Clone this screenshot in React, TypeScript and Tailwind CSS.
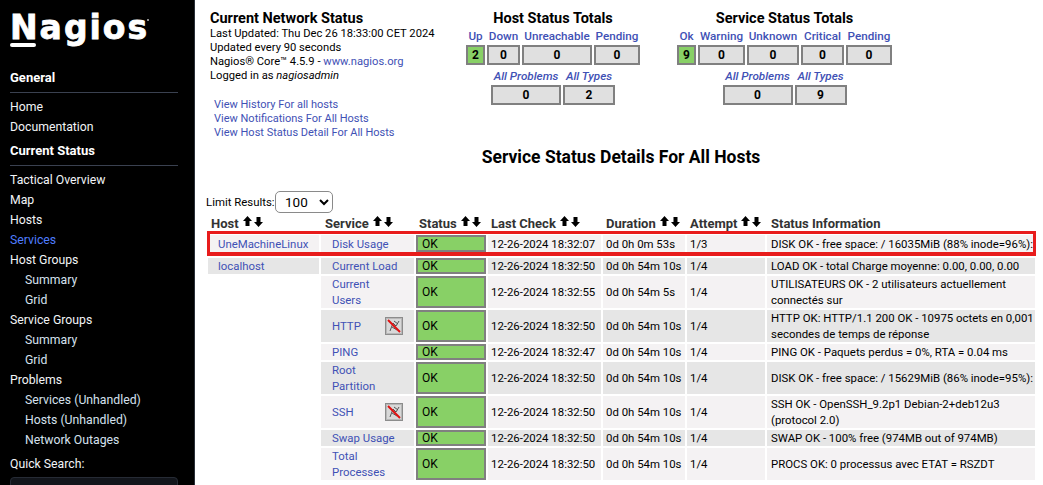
import React from "react";

const font = { fontFamily: "Roboto, 'Liberation Sans', sans-serif" };

function NavItem({ label, sub, active }: { label: string; sub?: boolean; active?: boolean }) {
  return (
    <div
      className={
        "h-5 leading-5 text-[12.25px] whitespace-nowrap " +
        (sub ? "pl-[15px] " : "") +
        (active ? "text-[#4f7dff]" : sub ? "text-[#d5e0ee]" : "text-[#f2f4f7]")
      }
    >
      {label}
    </div>
  );
}

function Sidebar() {
  return (
    <aside className="w-[195px] shrink-0 bg-black border-r border-[#2a2f38] pl-[10px] pr-[16px] h-[485px] overflow-hidden">
      <div className="relative h-[70px] pt-[9px]">
        <div className="text-white font-bold text-[33px] leading-[38px] tracking-[2px] [-webkit-text-stroke:0.8px_white]" style={{ fontFamily: "'DejaVu Sans', sans-serif" }}>
          Nagios
        </div>
        <div className="absolute left-0 top-[43px] w-[26px] h-[4px] bg-white rounded-sm" />
        <div className="absolute left-[137px] top-[19px] w-[2px] h-[2px] rounded-full bg-[#bbb]" />
      </div>
      <div className="h-[16px] leading-4 font-bold text-[13px] text-white">General</div>
      <div className="h-px bg-[#3a4150] mt-[6px] mb-[4px]" />
      <NavItem label="Home" />
      <NavItem label="Documentation" />
      <div className="h-[16px] leading-4 font-bold text-[13px] text-white mt-[6px]">Current Status</div>
      <div className="h-px bg-[#3a4150] mt-[6px] mb-[4px]" />
      <NavItem label="Tactical Overview" />
      <NavItem label="Map" />
      <NavItem label="Hosts" />
      <NavItem label="Services" active />
      <NavItem label="Host Groups" />
      <NavItem label="Summary" sub />
      <NavItem label="Grid" sub />
      <NavItem label="Service Groups" />
      <NavItem label="Summary" sub />
      <NavItem label="Grid" sub />
      <NavItem label="Problems" />
      <NavItem label="Services (Unhandled)" sub />
      <NavItem label="Hosts (Unhandled)" sub />
      <NavItem label="Network Outages" sub />
      <div className="h-4 leading-4 text-[12.25px] text-[#f2f4f7] mt-[6px]">Quick Search:</div>
      <div className="h-6 mt-[5px] rounded-[4px] bg-[#12151b] border border-[#262b35]" />
    </aside>
  );
}

function Tot({ w, v, ok }: { w: string; v: number; ok?: boolean }) {
  return (
    <div
      className={
        w +
        " h-[20px] border-2 border-[#808080] flex items-center justify-center font-bold text-[12px] text-black " +
        (ok ? "bg-[#88d066]" : "bg-[#e0e0e0]")
      }
    >
      {v}
    </div>
  );
}

function Lbl({ w, t, italic }: { w: string; t: string; italic?: boolean }) {
  return (
    <div className={w + " text-center text-[#3f51b5] font-medium text-[11.7px] leading-4 whitespace-nowrap " + (italic ? "italic" : "")}>
      {t}
    </div>
  );
}

function HostTotals() {
  return (
    <div className="w-[174px]">
      <div className="text-center font-bold text-[14.5px] pt-[2px] leading-[16px] text-black">Host Status Totals</div>
      <div className="flex gap-[2px] mt-px mb-px">
        <Lbl w="w-[19px]" t="Up" />
        <Lbl w="w-[33px]" t="Down" />
        <Lbl w="w-[70px]" t="Unreachable" />
        <Lbl w="w-[46px]" t="Pending" />
      </div>
      <div className="flex gap-[2px]">
        <Tot w="w-[19px]" v={2} ok />
        <Tot w="w-[33px]" v={0} />
        <Tot w="w-[70px]" v={0} />
        <Tot w="w-[46px]" v={0} />
      </div>
      <div className="flex gap-[2px] justify-center mt-[3px] mb-px">
        <Lbl w="w-[70px]" t="All Problems" italic />
        <Lbl w="w-[52px]" t="All Types" italic />
      </div>
      <div className="flex gap-[2px] justify-center">
        <Tot w="w-[70px]" v={0} />
        <Tot w="w-[52px]" v={2} />
      </div>
    </div>
  );
}

function ServiceTotals() {
  return (
    <div className="w-[215px]">
      <div className="text-center font-bold text-[14.5px] pt-[2px] leading-[16px] text-black">Service Status Totals</div>
      <div className="flex gap-[2px] mt-px mb-px">
        <Lbl w="w-[19px]" t="Ok" />
        <Lbl w="w-[47px]" t="Warning" />
        <Lbl w="w-[52px]" t="Unknown" />
        <Lbl w="w-[43px]" t="Critical" />
        <Lbl w="w-[46px]" t="Pending" />
      </div>
      <div className="flex gap-[2px]">
        <Tot w="w-[19px]" v={9} ok />
        <Tot w="w-[47px]" v={0} />
        <Tot w="w-[52px]" v={0} />
        <Tot w="w-[43px]" v={0} />
        <Tot w="w-[46px]" v={0} />
      </div>
      <div className="flex gap-[2px] justify-center mt-[3px] mb-px">
        <Lbl w="w-[70px]" t="All Problems" italic />
        <Lbl w="w-[52px]" t="All Types" italic />
      </div>
      <div className="flex gap-[2px] justify-center">
        <Tot w="w-[70px]" v={0} />
        <Tot w="w-[52px]" v={9} />
      </div>
    </div>
  );
}

function SortArrows() {
  return (
    <svg width="20" height="11" viewBox="0 0 20 11" className="inline-block ml-[4px] align-[1px]">
      <path d="M4.5 0 L9 5 H6.5 V10 H2.5 V5 H0 Z" fill="#000" />
      <path d="M15.5 11 L11 6 H13.5 V1 H17.5 V6 H20 Z" fill="#000" />
    </svg>
  );
}

function PassiveIcon() {
  return (
    <svg width="18" height="18" viewBox="0 0 18 18" className="shrink-0">
      <rect x="0.5" y="0.5" width="17" height="17" fill="#d8d8d8" stroke="#8c8c8c" strokeWidth="1" />
      <rect x="1.5" y="1.5" width="15" height="15" fill="none" stroke="#b8b8b8" strokeWidth="1" />
      <path d="M5 14 L8 6 L11 9 L14 4 M7 10 L12 13 M9 4 L13 7" stroke="#555" strokeWidth="1" fill="none" />
      <path d="M3 3 L15 15" stroke="#e01010" strokeWidth="2" />
    </svg>
  );
}

type Row = {
  host?: string;
  service: string[];
  icon?: boolean;
  check: string;
  dur: string;
  att: string;
  info: string[];
};

const rows: Row[] = [
  { host: "UneMachineLinux", service: ["Disk Usage"], check: "12-26-2024 18:32:07", dur: "0d 0h 0m 53s", att: "1/3", info: ["DISK OK - free space: / 16035MiB (88% inode=96%):"] },
  { host: "localhost", service: ["Current Load"], check: "12-26-2024 18:32:50", dur: "0d 0h 54m 10s", att: "1/4", info: ["LOAD OK - total Charge moyenne: 0.00, 0.00, 0.00"] },
  { service: ["Current", "Users"], check: "12-26-2024 18:32:55", dur: "0d 0h 54m 5s", att: "1/4", info: ["UTILISATEURS OK - 2 utilisateurs actuellement", "connectés sur"] },
  { service: ["HTTP"], icon: true, check: "12-26-2024 18:32:50", dur: "0d 0h 54m 10s", att: "1/4", info: ["HTTP OK: HTTP/1.1 200 OK - 10975 octets en 0,001", "secondes de temps de réponse"] },
  { service: ["PING"], check: "12-26-2024 18:32:47", dur: "0d 0h 54m 10s", att: "1/4", info: ["PING OK - Paquets perdus = 0%, RTA = 0.04 ms"] },
  { service: ["Root", "Partition"], check: "12-26-2024 18:32:50", dur: "0d 0h 54m 10s", att: "1/4", info: ["DISK OK - free space: / 15629MiB (86% inode=95%):"] },
  { service: ["SSH"], icon: true, check: "12-26-2024 18:32:50", dur: "0d 0h 54m 10s", att: "1/4", info: ["SSH OK - OpenSSH_9.2p1 Debian-2+deb12u3", "(protocol 2.0)"] },
  { service: ["Swap Usage"], check: "12-26-2024 18:32:50", dur: "0d 0h 54m 10s", att: "1/4", info: ["SWAP OK - 100% free (974MB out of 974MB)"] },
  { service: ["Total", "Processes"], check: "12-26-2024 18:32:50", dur: "0d 0h 54m 10s", att: "1/4", info: ["PROCS OK: 0 processus avec ETAT = RSZDT"] },
];

function Lines({ items }: { items: string[] }) {
  return (
    <div>
      {items.map((t) => (
        <div key={t} className="leading-[16px] whitespace-nowrap">
          {t}
        </div>
      ))}
    </div>
  );
}

function StatusTable() {
  const heads = ["Host", "Service", "Status", "Last Check", "Duration", "Attempt"];
  return (
    <table className="border-separate border-spacing-[2px] table-fixed w-[831px] text-[11.4px] text-black">
      <colgroup>
        <col className="w-[111px]" />
        <col className="w-[93px]" />
        <col className="w-[70px]" />
        <col className="w-[113px]" />
        <col className="w-[82px]" />
        <col className="w-[78px]" />
        <col />
      </colgroup>
      <thead>
        <tr>
          {heads.map((h, i) => (
            <th key={h} className={"p-0 text-left font-bold text-[13px] text-[#333] h-[18px] leading-4 whitespace-nowrap " + (i === 1 ? "pl-[4px]" : "pl-[3px]")}>
              {h}
              <SortArrows />
            </th>
          ))}
          <th className="p-0 pl-[4px] text-left font-bold text-[13px] text-[#333] leading-4 whitespace-nowrap">Status Information</th>
        </tr>
      </thead>
      <tbody>
        {rows.map((r, i) => {
          const bg = i % 2 === 0 ? "bg-[#f4f2f3]" : "bg-[#e6e6e6]";
          const cell = "p-0 pl-[3px] align-middle whitespace-nowrap leading-[16px] " + bg;
          const single = r.service.length === 1 && r.info.length === 1;
          return (
            <React.Fragment key={i}>
              <tr className={i === 0 ? "h-[17px]" : single ? "h-[16px]" : "h-[32px]"}>
                <td className={r.host ? "p-0 pl-[10px] leading-[16px] text-[#3f51b5] align-middle " + bg : "p-0"}>{r.host}</td>
                <td className={"p-0 pl-[11px] pr-[11px] align-middle " + bg}>
                  <div className="flex items-center justify-between text-[#3f51b5]">
                    <Lines items={r.service} />
                    {r.icon && <PassiveIcon />}
                  </div>
                </td>
                <td className="p-0 pl-[4px] align-middle bg-[#88d066] border-2 border-[#808080] leading-3 text-[12px]">OK</td>
                <td className={cell}>{r.check}</td>
                <td className={cell}>{r.dur}</td>
                <td className={cell}>{r.att}</td>
                <td className={"p-0 pl-[4px] align-middle whitespace-nowrap leading-[16px] " + bg}>
                  <Lines items={r.info} />
                </td>
              </tr>
              {i === 0 && (
                <tr className="h-[2px]">
                  <td colSpan={7} className="p-0" />
                </tr>
              )}
            </React.Fragment>
          );
        })}
      </tbody>
    </table>
  );
}

export default function App() {
  return (
    <div className="flex w-[1043px] h-[485px] overflow-hidden bg-white" style={font}>
      <Sidebar />
      <main className="flex-1 min-w-0 relative">
        <div className="flex pt-[9px] pl-[15px]">
          <div className="w-[256px] text-[11.2px] leading-[14px] text-black">
            <div className="font-bold text-[14.5px] pt-[2px] leading-[16px]">Current Network Status</div>
            <div>Last Updated: Thu Dec 26 18:33:00 CET 2024</div>
            <div>Updated every 90 seconds</div>
            <div>
              Nagios® Core™ 4.5.9 - <span className="text-[#3f51b5]">www.nagios.org</span>
            </div>
            <div>
              Logged in as <i>nagiosadmin</i>
            </div>
            <div className="mt-[15px] ml-[4px] text-[11px] text-[#3f51b5]">
              <div>View History For all hosts</div>
              <div>View Notifications For All Hosts</div>
              <div>View Host Status Detail For All Hosts</div>
            </div>
          </div>
          <HostTotals />
          <div className="w-[37px]" />
          <ServiceTotals />
        </div>
        <h1 className="absolute left-[4px] right-0 top-[148px] text-center font-bold text-[17.5px] leading-[18px] text-black">
          Service Status Details For All Hosts
        </h1>
        <div className="absolute left-[11px] top-[191px] flex items-center text-[11.4px] text-black">
          <span className="w-[69px] mt-[2px] whitespace-nowrap">Limit Results:</span>
          <select defaultValue="100" className="w-[58px] h-[22px] border border-[#8a8a8a] rounded-[5px] bg-white text-[13.5px] pl-[5px]" style={{ appearance: "auto" }}>
            <option>100</option>
          </select>
        </div>
        <div className="absolute left-[11px] top-[213px]">
          <StatusTable />
        </div>
        <div className="absolute left-[12px] top-[231px] w-[829px] h-[25px] border-[3px] border-b-[4px] border-[#e81c1c] pointer-events-none" />
      </main>
    </div>
  );
}
